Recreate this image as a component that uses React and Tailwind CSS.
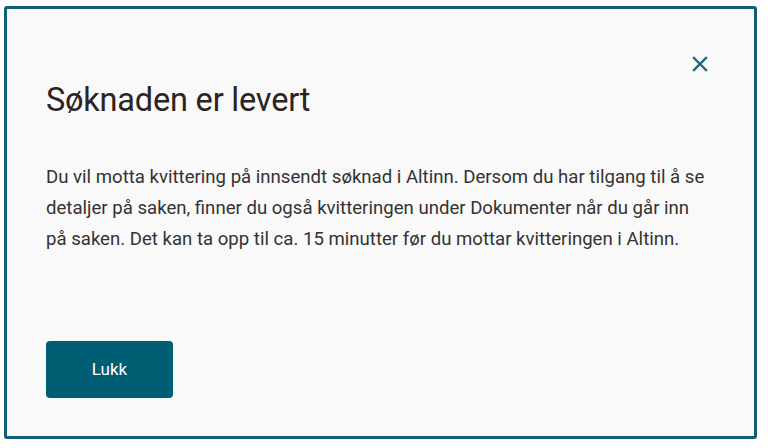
import React from 'react';

function CloseIcon() {
  return (
    <svg width="18" height="18" viewBox="0 0 18 18" fill="none">
      <path d="M3 3L15 15M15 3L3 15" stroke="#1a6a80" strokeWidth="2.4" strokeLinecap="square" />
    </svg>
  );
}

export default function App() {
  return (
    <div className="w-[768px] h-[448px] bg-white pt-[6px] pl-[4px]" style={{ fontFamily: 'Roboto, "Noto Sans", sans-serif' }}>
      <div className="w-[753px] h-[433px] border-[3px] border-[#0f5f76] rounded-[3px] bg-[#f9f9f9] flex flex-col pl-[39px] pr-[40px]">
        <div className="flex justify-end pt-[46px] pr-[5px]">
          <button className="text-[#1a6a80]">
            <CloseIcon />
          </button>
        </div>
        <h1 className="text-[32.5px] leading-[38px] text-[#2b2424] mt-[8px] tracking-[-0.2px]">Søknaden er levert</h1>
        <p className="mt-[43px] text-[18.6px] leading-[31px] text-[#333] max-w-[680px]">
          Du vil motta kvittering på innsendt søknad i Altinn. Dersom du har tilgang til å se detaljer på saken, finner du også kvitteringen under Dokumenter når du går inn på saken. Det kan ta opp til ca. 15 minutter før du mottar kvitteringen i Altinn.
        </p>
        <div className="mt-[86px]">
          <button className="w-[127px] h-[57px] rounded-[4px] bg-[#005e74] text-white text-[17px]">Lukk</button>
        </div>
      </div>
    </div>
  );
}
